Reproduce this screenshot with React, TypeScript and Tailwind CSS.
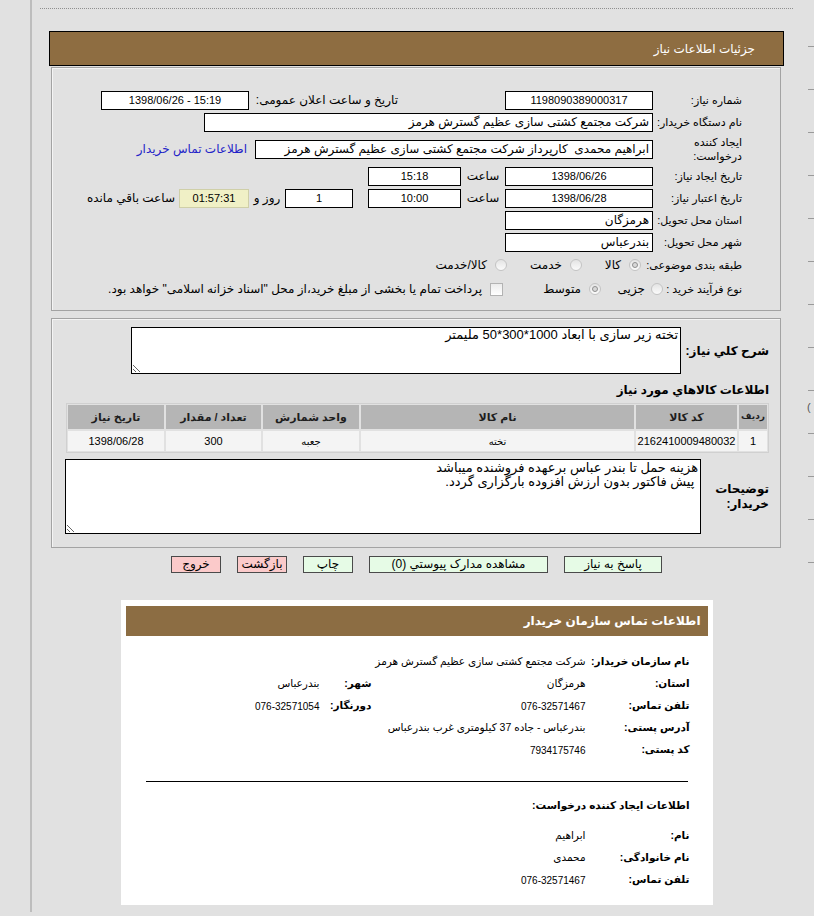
import React from 'react';

type BoxProps = { className?: string; children?: React.ReactNode };

// read-only field, looks like the old asp.net textbox
const Box = ({ className = '', children }: BoxProps) => (
  <div
    className={`h-[19px] shrink-0 overflow-hidden whitespace-nowrap border border-black bg-white px-[3px] leading-[17px] ${className}`}
  >
    {children}
  </div>
);

const Label = ({ className = 'w-[89px]', children }: BoxProps) => (
  <div className={`shrink-0 whitespace-nowrap text-[11px] ${className}`}>{children}</div>
);

const Radio = ({ checked }: { checked?: boolean }) => (
  <span className="inline-flex h-[12px] w-[12px] shrink-0 items-center justify-center rounded-full border border-[#c4c4c4] bg-linear-to-b from-[#e4e4e4] to-[#fbfbfb]">
    {checked && <span className="h-[6px] w-[6px] rounded-full border border-[#8f8f8f] bg-[#d8d8d8]" />}
  </span>
);

const Btn = ({ className = '', children }: BoxProps) => (
  <div className={`h-[17px] border border-[#4a4a4a] text-center text-[12px] leading-[15px] ${className}`}>{children}</div>
);

const Info = ({ label, value, small }: { label: string; value: string; small?: boolean }) => (
  <div className="flex h-[22px] items-center">
    <div className="w-[104px] shrink-0 text-[10.5px] font-bold">{label}</div>
    <div className={small ? 'text-[10px]' : 'text-[10.5px]'}>{value}</div>
  </div>
);

const tableHead = ['ردیف', 'کد کالا', 'نام کالا', 'واحد شمارش', 'تعداد / مقدار', 'تاریخ نیاز'];
const tableRow = ['1', '2162410009480032', 'تخته', 'جعبه', '300', '1398/06/28'];

const dashes = Array.from({ length: 13 }, (_, i) => i);

export default function App() {
  return (
    <div className="flex h-[916px] w-[814px] overflow-hidden bg-[#e1e1e1] font-['Liberation_Sans','DejaVu_Sans',sans-serif] text-[12px] text-black">
      <div className="w-[30px] shrink-0" />
      <div className="h-[912px] w-[2px] shrink-0 bg-[#bdbdbd]" />

      <div className="w-[768px] shrink-0">
        <div className="ml-[8px] mt-[8px] w-[753px] border-t border-dotted border-[#8f8f8f]" />

        <div dir="rtl" className="ml-[17px] w-[735px]">
          {/* title bar */}
          <div className="mt-[22px] flex h-[35px] items-center border border-black bg-[#8e6d41] pr-[28px] text-[12px] text-white">
            جزئیات اطلاعات نیاز
          </div>

          {/* main form */}
          <div className="mr-[3px] mt-[1px] w-[730px] border border-[#a3a3a3] pb-[9px] pt-[21px] shadow-[inset_1px_1px_0_#f4f4f4]">
            <div className="flex h-[22px] items-center whitespace-nowrap pr-[38px]">
              <Label>شماره نیاز:</Label>
              <Box className="w-[148px] text-center text-[11px]">1198090389000317</Box>
              <div className="mr-[107px] w-[149px] shrink-0 pl-[8px]">تاریخ و ساعت اعلان عمومی:</div>
              <Box className="w-[148px] text-center text-[11px]">
                <span dir="ltr">1398/06/26 - 15:19</span>
              </Box>
            </div>

            <div className="flex h-[22px] items-center whitespace-nowrap pr-[38px]">
              <Label>نام دستگاه خریدار:</Label>
              <Box className="w-[449px]">شرکت مجتمع کشتی سازی عظیم گسترش هرمز</Box>
            </div>

            <div className="flex h-[32px] items-center whitespace-nowrap pr-[38px]">
              <Label className="w-[89px] leading-[14px]">
                ایجاد کننده
                <br />
                درخواست:
              </Label>
              <Box className="w-[398px]">ابراهیم محمدی&nbsp; کارپرداز شرکت مجتمع کشتی سازی عظیم گسترش هرمز</Box>
              <div className="mr-[8px] text-[#2323c8]">اطلاعات تماس خریدار</div>
            </div>

            <div className="flex h-[22px] items-center whitespace-nowrap pr-[38px]">
              <Label>تاریخ ایجاد نیاز:</Label>
              <Box className="w-[148px] text-center text-[11px]">1398/06/26</Box>
              <div className="w-[44px] shrink-0 text-center">ساعت</div>
              <Box className="w-[93px] text-center text-[11px]">15:18</Box>
            </div>

            <div className="flex h-[22px] items-center whitespace-nowrap pr-[38px]">
              <Label>تاریخ اعتبار نیاز:</Label>
              <Box className="w-[148px] text-center text-[11px]">1398/06/28</Box>
              <div className="w-[44px] shrink-0 text-center">ساعت</div>
              <Box className="w-[93px] text-center text-[11px]">10:00</Box>
              <Box className="mr-[15px] w-[68px] text-center text-[11px]">1</Box>
              <div className="w-[36px] shrink-0 text-center">روز و</div>
              <div className="h-[19px] w-[70px] shrink-0 border border-[#cfcfa8] bg-[#f0f0c6] text-center text-[11px] leading-[17px]">
                01:57:31
              </div>
              <div className="mr-[4px]">ساعت باقي مانده</div>
            </div>

            <div className="flex h-[22px] items-center whitespace-nowrap pr-[38px]">
              <Label>استان محل تحویل:</Label>
              <Box className="w-[148px]">هرمزگان</Box>
            </div>

            <div className="flex h-[22px] items-center whitespace-nowrap pr-[38px]">
              <Label>شهر محل تحویل:</Label>
              <Box className="w-[148px]">بندرعباس</Box>
            </div>

            <div className="flex h-[24px] items-center whitespace-nowrap pr-[38px]">
              <Label>طبقه بندی موضوعی:</Label>
              <div className="flex w-[69px] shrink-0 items-center gap-[8px] pr-[12px]">
                <Radio checked />
                <span>کالا</span>
              </div>
              <div className="flex w-[74px] shrink-0 items-center gap-[8px] pr-[2px]">
                <Radio />
                <span>خدمت</span>
              </div>
              <div className="flex items-center gap-[8px] pr-[3px]">
                <Radio />
                <span>کالا/خدمت</span>
              </div>
            </div>

            <div className="flex h-[24px] items-center whitespace-nowrap pr-[38px]">
              <Label className="w-[79px]">نوع فرآیند خرید :</Label>
              <div className="flex w-[62px] shrink-0 items-center gap-[6px]">
                <Radio />
                <span>جزیی</span>
              </div>
              <div className="flex w-[98px] shrink-0 items-center gap-[8px]">
                <Radio checked />
                <span>متوسط</span>
              </div>
              <div className="flex items-center gap-[8px]">
                <span className="h-[13px] w-[13px] shrink-0 border border-[#b3b3b3] bg-linear-to-b from-[#ececec] to-white" />
                <span>پرداخت تمام یا بخشی از مبلغ خرید،از محل "اسناد خزانه اسلامی" خواهد بود.</span>
              </div>
            </div>
          </div>

          {/* description + goods */}
          <div className="mr-[3px] mt-[7px] w-[730px] border border-[#a3a3a3] pb-[13px] pr-[11px] pt-[8px] shadow-[inset_1px_1px_0_#f4f4f4]">
            <div className="flex items-center">
              <div className="w-[88px] shrink-0 text-[12px] font-bold">شرح کلي نياز:</div>
              <textarea
                readOnly
                className="h-[47px] w-[550px] border border-black bg-white px-[2px] text-[13px] leading-[14px] outline-none"
                defaultValue="تخته زیر سازی با ابعاد 1000*300*50 ملیمتر"
              />
            </div>

            <div className="mt-[8px] text-[12px] font-bold leading-[16px]">اطلاعات کالاهاي مورد نياز</div>

            <div className="mt-[5px] w-[703px] border border-[#d0d0d0] p-[1px]">
              <div className="grid grid-cols-[28px_101px_273px_96px_95px_96px] gap-[2px]">
                {tableHead.map((h, i) => (
                  <div
                    key={h}
                    className={`flex h-[24px] items-center justify-center bg-[#b5b5b5] font-bold text-[#1e1e1e] ${i === 0 ? 'text-[9px]' : 'text-[11px]'}`}
                  >
                    {h}
                  </div>
                ))}
                {tableRow.map((c, i) => (
                  <div
                    key={i}
                    className={`flex h-[20px] items-center justify-center bg-[#f4f4f4] ${i === 2 || i === 3 ? 'text-[10px]' : 'text-[11px]'}`}
                  >
                    {c}
                  </div>
                ))}
              </div>
            </div>

            <div className="mt-[6px] flex items-center">
              <div className="w-[68px] shrink-0 text-[12px] font-bold leading-[15px]">
                توضیحات
                <br />
                خریدار:
              </div>
              <textarea
                readOnly
                className="h-[75px] w-[636px] border border-black bg-white px-[2px] pt-[1px] text-[13px] leading-[14px] outline-none"
                defaultValue={'هزینه حمل تا بندر عباس برعهده فروشنده میباشد\n پیش فاکتور بدون ارزش افزوده بارگزاری گردد.'}
              />
            </div>
          </div>

          {/* actions */}
          <div className="mt-[8px] flex justify-center gap-[16px]">
            <Btn className="w-[98px] bg-[#e6fbe6]">پاسخ به نیاز</Btn>
            <Btn className="w-[179px] bg-[#e6fbe6]">مشاهده مدارک پیوستي (0)</Btn>
            <Btn className="w-[50px] bg-[#e6fbe6]">چاپ</Btn>
            <Btn className="w-[50px] bg-[#fbcaca]">بازگشت</Btn>
            <Btn className="w-[50px] bg-[#fbcaca]">خروج</Btn>
          </div>

          {/* buyer contact card */}
          <div className="mx-auto mt-[27px] w-[592px] whitespace-nowrap bg-white px-[5px] pb-[14px] pt-[6px]">
            <div className="flex h-[30px] items-center bg-[#8c6d43] pr-[7px] text-[12px] font-bold text-white">
              اطلاعات تماس سازمان خریدار
            </div>

            <div className="pr-[18px] pt-[15px]">
              <Info label="نام سازمان خریدار:" value="شرکت مجتمع کشتی سازی عظیم گسترش هرمز" />
              <div className="flex h-[22px] items-center">
                <div className="w-[104px] shrink-0 text-[10.5px] font-bold">استان:</div>
                <div className="w-[214px] shrink-0 text-[10.5px]">هرمزگان</div>
                <div className="w-[52px] shrink-0 text-[10.5px] font-bold">شهر:</div>
                <div className="text-[10.5px]">بندرعباس</div>
              </div>
              <div className="flex h-[22px] items-center">
                <div className="w-[104px] shrink-0 text-[10.5px] font-bold">تلفن تماس:</div>
                <div className="w-[214px] shrink-0 text-[10px]">076-32571467</div>
                <div className="w-[52px] shrink-0 text-[10.5px] font-bold">دورنگار:</div>
                <div className="text-[10px]">076-32571054</div>
              </div>
              <Info label="آدرس پستی:" value="بندرعباس - جاده 37 کیلومتری غرب بندرعباس" />
              <Info label="کد پستی:" value="7934175746" small />
            </div>

            <div className="mx-[20px] mt-[20px] h-px bg-black" />

            <div className="pr-[18px]">
              <div className="mt-[13px] flex h-[22px] items-center text-[10.5px] font-bold">اطلاعات ایجاد کننده درخواست:</div>
              <div className="mt-[8px]">
                <Info label="نام:" value="ابراهیم" />
                <Info label="نام خانوادگی:" value="محمدی" />
                <Info label="تلفن تماس:" value="076-32571467" small />
              </div>
            </div>
          </div>
        </div>
      </div>

      {/* cut-off edge of the neighbouring frame */}
      <div className="w-[14px] shrink-0 pt-[46px]">
        {dashes.map((i) => (
          <div key={i} className="h-[43px]">
            <div className="ml-[8px] h-px w-[6px] bg-[#9a9a9a]" />
            {i === 8 && <div className="ml-[7px] mt-[10px] text-[11px] leading-[12px] text-[#555]">(</div>}
          </div>
        ))}
      </div>
    </div>
  );
}
